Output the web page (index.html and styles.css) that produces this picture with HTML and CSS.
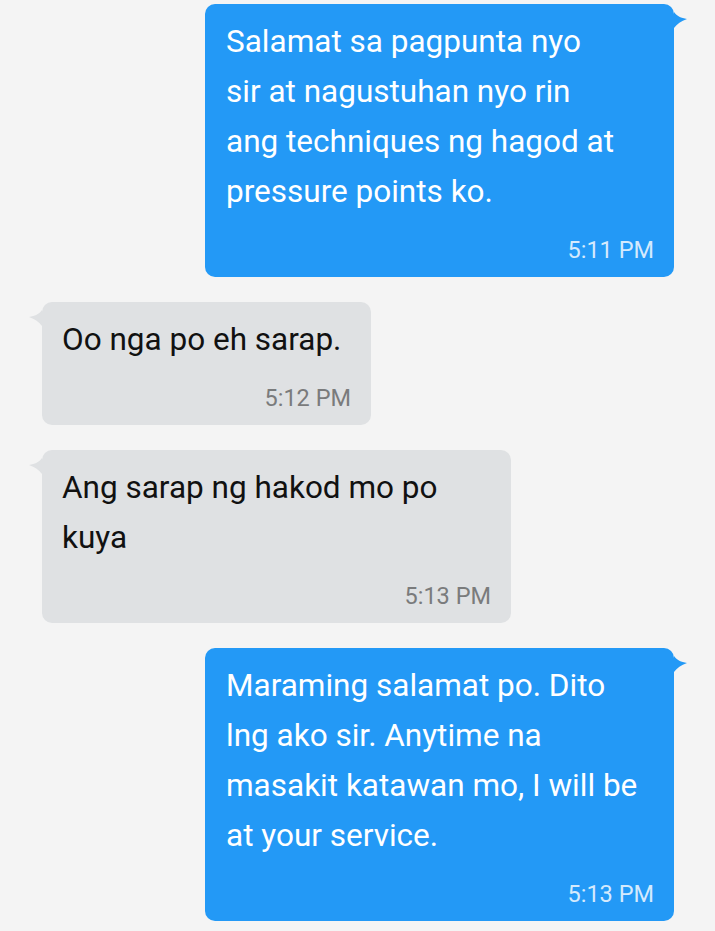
FILE: index.html
```html
<!DOCTYPE html>
<html>
<head>
    <meta charset="utf-8">
    <title>Messages</title>
    <link rel="stylesheet" href="styles.css">
</head>
<body>

    <!-- conversation thread -->
    <div class="thread">

        <div class="bubble sent wide">
            <svg class="tail" viewBox="-1 0 13 16" width="13" height="16"><path d="M-1,0 C2,4 6,6 12,7 C6,9 2,12 -1,16 Z"/></svg>
            <p class="msg-text">Salamat sa pagpunta nyo<br>sir at nagustuhan nyo rin<br>ang techniques ng hagod at<br>pressure points ko.</p>
            <div class="msg-time">5:11 PM</div>
        </div>

        <div class="bubble received short">
            <svg class="tail" viewBox="-1 0 13 16" width="13" height="16"><path d="M-1,0 C2,4 6,6 12,7 C6,9 2,12 -1,16 Z"/></svg>
            <p class="msg-text">Oo nga po eh sarap.</p>
            <div class="msg-time">5:12 PM</div>
        </div>

        <div class="bubble received wide">
            <svg class="tail" viewBox="-1 0 13 16" width="13" height="16"><path d="M-1,0 C2,4 6,6 12,7 C6,9 2,12 -1,16 Z"/></svg>
            <p class="msg-text">Ang sarap ng hakod mo po<br>kuya</p>
            <div class="msg-time">5:13 PM</div>
        </div>

        <div class="bubble sent wide">
            <svg class="tail" viewBox="-1 0 13 16" width="13" height="16"><path d="M-1,0 C2,4 6,6 12,7 C6,9 2,12 -1,16 Z"/></svg>
            <p class="msg-text">Maraming salamat po. Dito<br>lng ako sir. Anytime na<br>masakit katawan mo, I will be<br>at your service.</p>
            <div class="msg-time">5:13 PM</div>
        </div>

    </div>

</body>
</html>
```

FILE: styles.css
```css
body {
    margin: 0;
    padding: 0;
    background-color: #f4f4f4;
    font-family: Roboto, "Noto Sans", sans-serif;
}

.thread {
    display: flex;
    flex-direction: column;
    gap: 25px;
    padding: 4px 41px 0 42px;
}

.bubble {
    position: relative;
    width: fit-content;
    box-sizing: border-box;
    border-radius: 10px;
    padding: 13px 20px 14px 20px;
}

.bubble.wide {
    width: 469px;
}

.bubble.short {
    width: 329px;
}

/* outgoing, blue, on the right */
.sent {
    align-self: flex-end;
    background-color: #2399f6;
    color: #ffffff;
    padding-left: 21px;
}

.sent .msg-time {
    color: #d4eafd;
}

.sent .tail {
    left: 100%;
    fill: #2399f6;
}

/* incoming, grey, on the left */
.received {
    align-self: flex-start;
    background-color: #dfe1e3;
    color: #111111;
}

.received .msg-time {
    color: #7a7b7c;
}

.received .tail {
    right: 100%;
    fill: #dfe1e3;
    transform: scaleX(-1);
}

.tail {
    position: absolute;
    top: 8px;
}

.msg-text {
    margin: 0;
    font-size: 31.5px;
    line-height: 50px;
}

.msg-time {
    margin-top: 20px;
    font-size: 23.5px;
    line-height: 26px;
    text-align: right;
}
```
